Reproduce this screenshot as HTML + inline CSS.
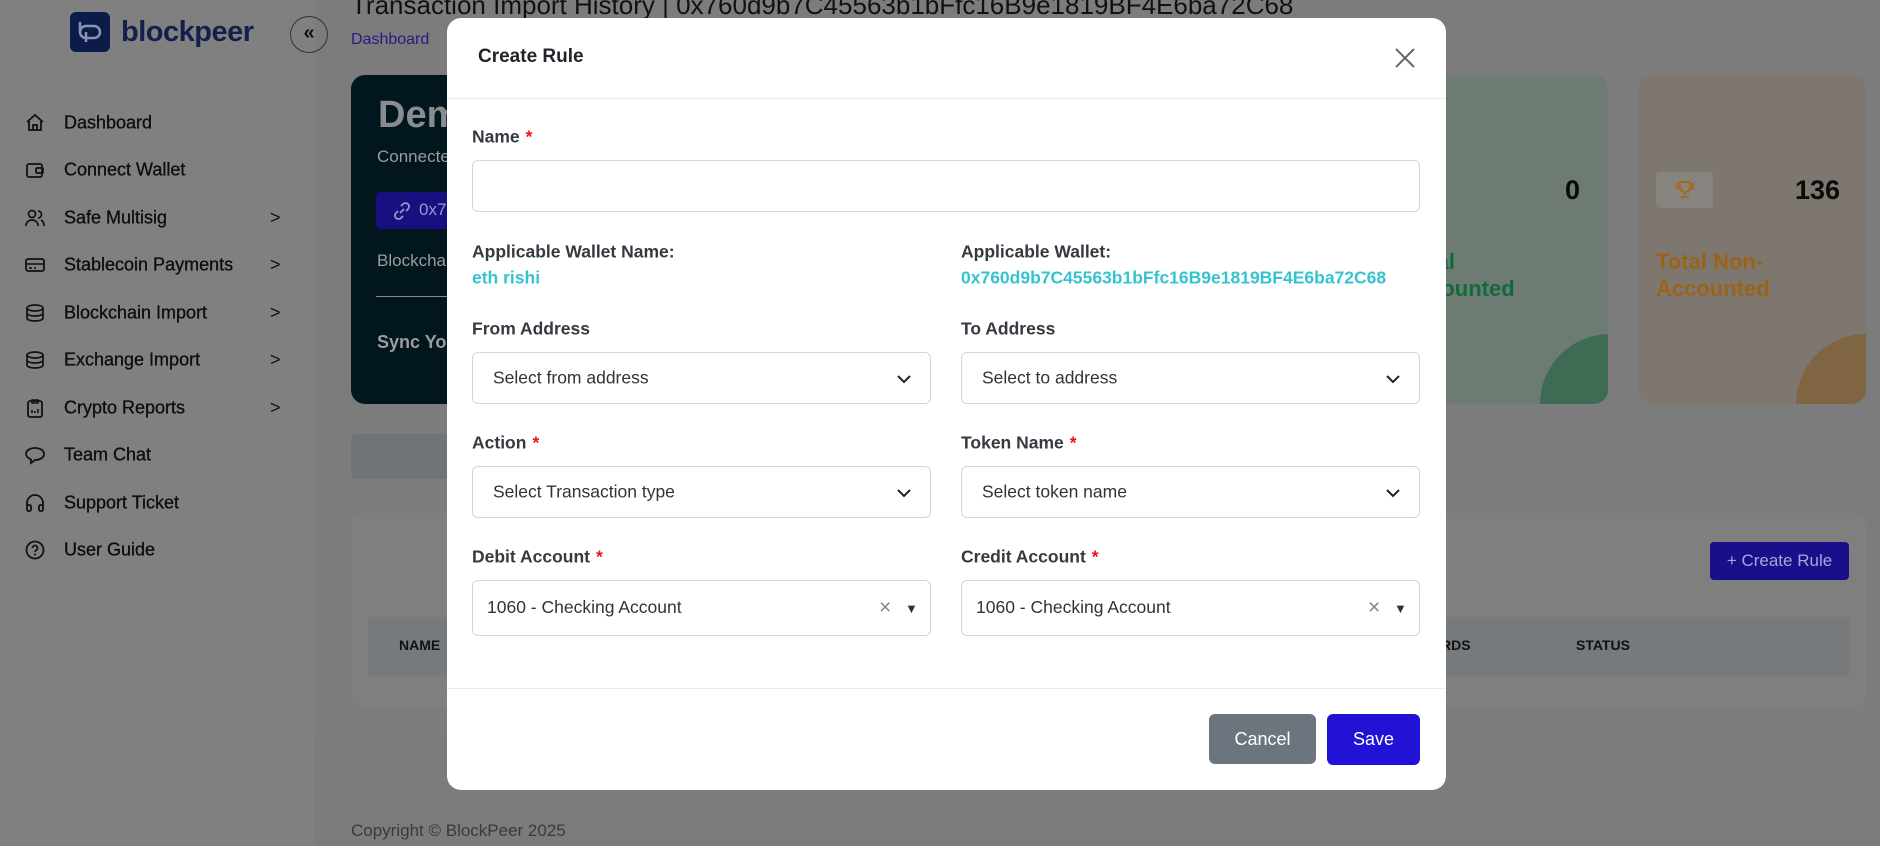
<!DOCTYPE html>
<html><head><meta charset="utf-8"><style>
*{box-sizing:border-box;margin:0;padding:0}
body{width:1880px;height:846px;overflow:hidden;background:#7c7c7c;font-family:"Liberation Sans",sans-serif;position:relative;color:#111}
.a{position:absolute;white-space:nowrap}
.side{position:absolute;left:0;top:0;width:315px;height:846px;background:#808080}
.mi{position:absolute;left:64px;font-size:18px;color:#0d0d0d;transform:translateY(-50%);-webkit-text-stroke:0.3px #0d0d0d}
.ic{position:absolute;left:24px;width:22px;height:22px;transform:translateY(-50%)}
.chev{position:absolute;left:270px;font-size:18px;color:#111;transform:translateY(-50%)}
.modal{position:absolute;left:447px;top:18px;width:999px;height:772px;background:#fff;border-radius:14px}
.lbl{position:absolute;font-size:17.5px;font-weight:bold;color:#343a40;transform:translateY(-50%)}
.lbl b{color:#e11;margin-left:6px}
.inp{position:absolute;height:52px;border:1px solid #d3d6da;border-radius:6px;background:#fff}
.sel span{position:absolute;left:20px;top:50%;transform:translateY(-50%);font-size:17.5px;color:#333}
.sel svg{position:absolute;right:18px;top:19px}
</style></head><body>
<div class="side"></div>
<div class="a" style="left:70px;top:12px;width:40px;height:40px;background:#0c1c4a;border-radius:6px">
<svg width="40" height="40" viewBox="0 0 40 40"><path d="M10 10v10a6 6 0 0 0 6 6h8a6 6 0 0 0 0-12h-8a6 6 0 0 0-6 6M16 20v10" fill="none" stroke="#8c95b0" stroke-width="2.5"/></svg></div>
<div class="a" style="left:121px;top:16px;font-size:29px;font-weight:bold;color:#13204e;letter-spacing:-0.5px">blockpeer</div>
<div class="a" style="left:290px;top:16px;width:38px;height:37px;border:1px solid #333;border-radius:50%;text-align:center;line-height:33px;font-size:20px;font-weight:bold;color:#111">«</div>

<svg class="ic" style="top:123px" viewBox="0 0 22 22"><path d="M3 10L11 3l8 7M5 9v9h12V9M9 18v-5h4v5" fill="none" stroke="#111" stroke-width="1.8"/></svg>
<div class="mi" style="top:123px">Dashboard</div>
<svg class="ic" style="top:170px" viewBox="0 0 22 22"><rect x="3" y="5" width="15" height="13" rx="2" fill="none" stroke="#111" stroke-width="1.8"/><rect x="12" y="9" width="7" height="5" rx="1" fill="none" stroke="#111" stroke-width="1.8"/></svg>
<div class="mi" style="top:170px">Connect Wallet</div>
<svg class="ic" style="top:218px" viewBox="0 0 22 22"><circle cx="8" cy="7" r="3.5" fill="none" stroke="#111" stroke-width="1.7"/><path d="M2 19c0-4 3-6 6-6s6 2 6 6M14 4a3.5 3.5 0 0 1 0 7M17 13c2 1 3 3 3 6" fill="none" stroke="#111" stroke-width="1.7"/></svg>
<div class="mi" style="top:218px">Safe Multisig</div><div class="chev" style="top:218px">&gt;</div>
<svg class="ic" style="top:265px" viewBox="0 0 22 22"><rect x="2" y="5" width="18" height="12" rx="2" fill="none" stroke="#111" stroke-width="1.8"/><path d="M2 10h18M5 14h3M10 14h2" stroke="#111" stroke-width="1.6"/></svg>
<div class="mi" style="top:265px">Stablecoin Payments</div><div class="chev" style="top:265px">&gt;</div>
<svg class="ic" style="top:313px" viewBox="0 0 22 22"><ellipse cx="11" cy="6" rx="8" ry="3" fill="none" stroke="#111" stroke-width="1.7"/><path d="M3 6v10c0 2 4 3 8 3s8-1 8-3V6M3 11c0 2 4 3 8 3s8-1 8-3" fill="none" stroke="#111" stroke-width="1.7"/></svg>
<div class="mi" style="top:313px">Blockchain Import</div><div class="chev" style="top:313px">&gt;</div>
<svg class="ic" style="top:360px" viewBox="0 0 22 22"><ellipse cx="11" cy="6" rx="8" ry="3" fill="none" stroke="#111" stroke-width="1.7"/><path d="M3 6v10c0 2 4 3 8 3s8-1 8-3V6M3 11c0 2 4 3 8 3s8-1 8-3" fill="none" stroke="#111" stroke-width="1.7"/></svg>
<div class="mi" style="top:360px">Exchange Import</div><div class="chev" style="top:360px">&gt;</div>
<svg class="ic" style="top:408px" viewBox="0 0 22 22"><rect x="4" y="4" width="14" height="16" rx="2" fill="none" stroke="#111" stroke-width="1.8"/><path d="M8 3h6v3H8zM8 16v-3M11 16v-2M14 16v-4" fill="none" stroke="#111" stroke-width="1.6"/></svg>
<div class="mi" style="top:408px">Crypto Reports</div><div class="chev" style="top:408px">&gt;</div>
<svg class="ic" style="top:455px" viewBox="0 0 22 22"><path d="M11 4c5 0 9 2.5 9 6s-4 6-9 6l-4 3v-3.5C4 14 2 12 2 10c0-3.5 4-6 9-6z" fill="none" stroke="#111" stroke-width="1.8"/></svg>
<div class="mi" style="top:455px">Team Chat</div>
<svg class="ic" style="top:503px" viewBox="0 0 22 22"><path d="M3 15v-4a8 8 0 0 1 16 0v4" fill="none" stroke="#111" stroke-width="1.8"/><rect x="3" y="13" width="4" height="6" rx="1.5" fill="none" stroke="#111" stroke-width="1.8"/><rect x="15" y="13" width="4" height="6" rx="1.5" fill="none" stroke="#111" stroke-width="1.8"/></svg>
<div class="mi" style="top:503px">Support Ticket</div>
<svg class="ic" style="top:550px" viewBox="0 0 22 22"><circle cx="11" cy="11" r="8.5" fill="none" stroke="#111" stroke-width="1.8"/><path d="M8.5 9a2.5 2.5 0 1 1 3.5 2.3c-.7.4-1 .9-1 1.7" fill="none" stroke="#111" stroke-width="1.7"/><circle cx="11" cy="15.5" r="1" fill="#111"/></svg>
<div class="mi" style="top:550px">User Guide</div>

<div class="a" style="left:351px;top:-10px;font-size:26px;color:#111">Transaction Import History | 0x760d9b7C45563b1bFfc16B9e1819BF4E6ba72C68</div>
<div class="a" style="left:351px;top:31px;font-size:16px;color:#241a86">Dashboard</div>

<div class="a" style="left:351px;top:75px;width:700px;height:329px;background:#01161d;border-radius:14px"></div>
<div class="a" style="left:378px;top:94px;font-size:38px;font-weight:bold;color:#8a8d8f">Demo</div>
<div class="a" style="left:377px;top:147px;font-size:17px;color:#9a9c9e">Connected</div>
<div class="a" style="left:376px;top:192px;width:120px;height:37px;background:#1a0f80;border-radius:5px;color:#9a96c8;font-size:17px;padding:8px 0 0 43px">0x7</div>
<svg class="a" style="left:392px;top:201px" width="20" height="20" viewBox="0 0 20 20"><path d="M8 12l4-4M9 5l2-2a3.5 3.5 0 0 1 5 5l-2 2M11 15l-2 2a3.5 3.5 0 0 1-5-5l2-2" fill="none" stroke="#9a96c8" stroke-width="1.8"/></svg>
<div class="a" style="left:377px;top:251px;font-size:17px;color:#9a9c9e">Blockchain</div>
<div class="a" style="left:376px;top:296px;width:200px;height:1px;background:#888"></div>
<div class="a" style="left:377px;top:332px;font-size:18px;font-weight:bold;color:#9a9c9e">Sync Your</div>
<div class="a" style="left:351px;top:434px;width:300px;height:45px;background:#6f7479;border-radius:6px"></div>

<div class="a" style="left:1300px;top:75px;width:308px;height:329px;background:#6e7b73;border-radius:14px;overflow:hidden">
<div class="a" style="left:240px;top:259px;width:90px;height:90px;background:#3d6b53;border-radius:70px 0 0 0"></div></div>
<div class="a" style="left:1565px;top:175px;font-size:27px;font-weight:bold;color:#0a0a0a">0</div>
<div class="a" style="left:1404px;top:248px;font-size:22px;font-weight:bold;color:#0f6b3c;line-height:27px">Total</div>
<div class="a" style="left:1401px;top:275px;font-size:22px;font-weight:bold;color:#0f6b3c;line-height:27px">Accounted</div>
<div class="a" style="left:1638px;top:75px;width:228px;height:329px;background:#7e776f;border-radius:14px;overflow:hidden">
<div class="a" style="left:158px;top:259px;width:80px;height:80px;background:#7f6541;border-radius:70px 0 0 0"></div></div>
<div class="a" style="left:1656px;top:172px;width:57px;height:36px;background:#87837e;border-radius:4px"></div>
<svg class="a" style="left:1674px;top:180px" width="22" height="20" viewBox="0 0 22 20"><path d="M6 2h10v5a5 5 0 0 1-10 0zM6 4H3v2a3 3 0 0 0 3 3M16 4h3v2a3 3 0 0 1-3 3M11 12v3M7 17h8" fill="none" stroke="#a5691f" stroke-width="2"/></svg>
<div class="a" style="left:1795px;top:175px;font-size:27px;font-weight:bold;color:#0a0a0a">136</div>
<div class="a" style="left:1656px;top:248px;font-size:22px;font-weight:bold;color:#9b6318;line-height:27px">Total Non-<br>Accounted</div>

<div class="a" style="left:351px;top:513px;width:1515px;height:195px;background:#7f7f7f;border-radius:12px"></div>
<div class="a" style="left:1710px;top:542px;width:139px;height:38px;background:#1a0f8a;border-radius:4px;color:#a9a6d6;font-size:17px;line-height:38px;text-align:center">+ Create Rule</div>
<div class="a" style="left:368px;top:617px;width:1481px;height:59px;background:#777a7d"></div>
<div class="a" style="left:399px;top:637px;font-size:14px;font-weight:bold;color:#111">NAME</div>
<div class="a" style="left:1420px;top:637px;font-size:14px;font-weight:bold;color:#111">CORDS</div>
<div class="a" style="left:1576px;top:637px;font-size:14px;font-weight:bold;color:#111">STATUS</div>
<div class="a" style="left:315px;top:740px;width:1565px;height:106px;background:#7b7b7b"></div>
<div class="a" style="left:351px;top:821px;font-size:17px;color:#3a3a3a">Copyright © BlockPeer 2025</div>

<div class="modal">
<div class="a" style="left:31px;top:28px;font-size:19px;font-weight:bold;color:#212529">Create Rule</div>
<svg class="a" style="left:947px;top:29px" width="22" height="22" viewBox="0 0 22 22"><path d="M2 2l18 18M20 2L2 20" stroke="#666" stroke-width="2"/></svg>
<div class="a" style="left:0;top:80px;width:999px;height:1px;background:#e9ecef"></div>

<div class="lbl" style="left:25px;top:119px">Name<b>*</b></div>
<div class="inp" style="left:25px;top:142px;width:948px"></div>

<div class="lbl" style="left:25px;top:234px">Applicable Wallet Name:</div>
<div class="lbl" style="left:25px;top:260px;color:#35c3d0">eth rishi</div>
<div class="lbl" style="left:514px;top:234px">Applicable Wallet:</div>
<div class="lbl" style="left:514px;top:260px;color:#35c3d0">0x760d9b7C45563b1bFfc16B9e1819BF4E6ba72C68</div>

<div class="lbl" style="left:25px;top:311px">From Address</div>
<div class="lbl" style="left:514px;top:311px">To Address</div>
<div class="inp sel" style="left:25px;top:334px;width:459px"><span>Select from address</span><svg width="16" height="14" viewBox="0 0 16 14"><path d="M2 4l6 6 6-6" fill="none" stroke="#222" stroke-width="2"/></svg></div>
<div class="inp sel" style="left:514px;top:334px;width:459px"><span>Select to address</span><svg width="16" height="14" viewBox="0 0 16 14"><path d="M2 4l6 6 6-6" fill="none" stroke="#222" stroke-width="2"/></svg></div>

<div class="lbl" style="left:25px;top:425px">Action<b>*</b></div>
<div class="lbl" style="left:514px;top:425px">Token Name<b>*</b></div>
<div class="inp sel" style="left:25px;top:448px;width:459px"><span>Select Transaction type</span><svg width="16" height="14" viewBox="0 0 16 14"><path d="M2 4l6 6 6-6" fill="none" stroke="#222" stroke-width="2"/></svg></div>
<div class="inp sel" style="left:514px;top:448px;width:459px"><span>Select token name</span><svg width="16" height="14" viewBox="0 0 16 14"><path d="M2 4l6 6 6-6" fill="none" stroke="#222" stroke-width="2"/></svg></div>

<div class="lbl" style="left:25px;top:539px">Debit Account<b>*</b></div>
<div class="lbl" style="left:514px;top:539px">Credit Account<b>*</b></div>
<div class="inp" style="left:25px;top:562px;width:459px;height:56px"><span class="a" style="left:14px;top:16px;font-size:17.5px;color:#333">1060 - Checking Account</span><span class="a" style="left:406px;top:15px;font-size:21px;color:#888">×</span><span class="a" style="left:432px;top:20px;font-size:13px;color:#333">▼</span></div>
<div class="inp" style="left:514px;top:562px;width:459px;height:56px"><span class="a" style="left:14px;top:16px;font-size:17.5px;color:#333">1060 - Checking Account</span><span class="a" style="left:406px;top:15px;font-size:21px;color:#888">×</span><span class="a" style="left:432px;top:20px;font-size:13px;color:#333">▼</span></div>

<div class="a" style="left:0;top:670px;width:999px;height:1px;background:#e9ecef"></div>
<div class="a" style="left:762px;top:696px;width:107px;height:50px;background:#6c757d;border-radius:6px;color:#fff;font-size:18px;line-height:50px;text-align:center">Cancel</div>
<div class="a" style="left:880px;top:696px;width:93px;height:51px;background:#2212d6;border-radius:6px;color:#fff;font-size:18px;line-height:51px;text-align:center">Save</div>
</div>
</body></html>
